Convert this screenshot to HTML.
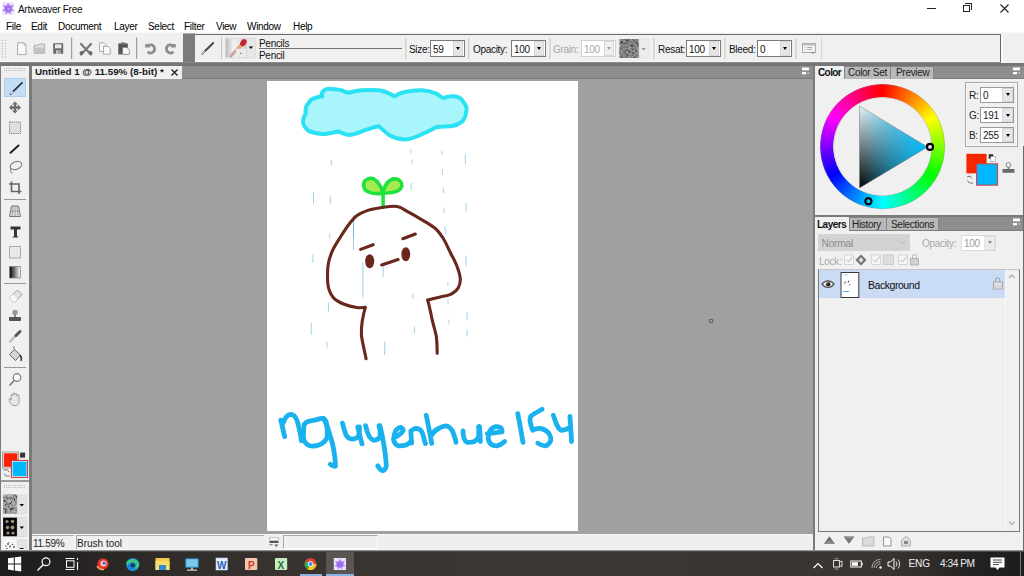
<!DOCTYPE html>
<html><head><meta charset="utf-8">
<style>
*{margin:0;padding:0;box-sizing:border-box}
html,body{width:1024px;height:576px;overflow:hidden;background:#fff;font-family:"Liberation Sans",sans-serif;color:#000}
.a{position:absolute}
.t{position:absolute;white-space:nowrap;font-size:10px;line-height:14px;color:#000;letter-spacing:-.3px}
.vs{position:absolute;width:1px;background:#c9c9c9}
.box{position:absolute;background:#fff;border:1px solid #7a7a7a}
.dd{position:absolute;background:#e6e6e6;border:1px solid #d6d6d6}
.arr{position:absolute;width:0;height:0;border-left:2.5px solid transparent;border-right:2.5px solid transparent;border-top:3px solid #000}
svg{position:absolute;overflow:visible}
</style></head><body>
<!-- ============ TITLE BAR ============ -->
<svg style="left:2px;top:2px" width="13" height="13" viewBox="0 0 13 13">
<rect x="0" y="0" width="12.5" height="13" fill="#eee6fb"/>
<path d="M6.2 .8L8 3.6L11.6 2.8L10 6.4L12.3 8.8L9 9.6L8.4 12.4L6.2 10.6L3.6 12.4L3.2 9.6L.2 8.6L2.4 6.3L1 3L4.4 3.6Z" fill="#b58af2"/>
<circle cx="6.2" cy="6.6" r="3.2" fill="#9c6cf0"/>
<circle cx="6.6" cy="7" r="1.2" fill="#c8a4f8"/>
</svg>
<div class="t" style="left:18px;top:3px;color:#111">Artweaver Free</div>
<!-- window controls -->
<div class="a" style="left:927px;top:8px;width:9px;height:1px;background:#222"></div>
<div class="a" style="left:963px;top:5px;width:7px;height:7px;border:1px solid #222"></div>
<div class="a" style="left:965px;top:3px;width:7px;height:7px;border-top:1px solid #222;border-right:1px solid #222"></div>
<svg style="left:1000px;top:4px" width="9" height="9" viewBox="0 0 9 9"><path d="M.5 .5L8.5 8.5M8.5 .5L.5 8.5" stroke="#222" stroke-width="1.1"/></svg>

<!-- ============ MENU ============ -->
<div class="t" style="left:6px;top:20px">File</div>
<div class="t" style="left:31px;top:20px">Edit</div>
<div class="t" style="left:58px;top:20px">Document</div>
<div class="t" style="left:114px;top:20px">Layer</div>
<div class="t" style="left:148px;top:20px">Select</div>
<div class="t" style="left:184px;top:20px">Filter</div>
<div class="t" style="left:216px;top:20px">View</div>
<div class="t" style="left:247px;top:20px">Window</div>
<div class="t" style="left:293px;top:20px">Help</div>

<!-- ============ TOOLBAR ROW ============ -->
<div class="a" style="left:0;top:32px;width:1024px;height:1px;background:#f8f8f8"></div>
<div class="a" style="left:0;top:33px;width:1024px;height:29px;background:#f0f0f0"></div>
<div class="a" style="left:183px;top:33px;width:12px;height:1px;background:#b0b0b0"></div>
<div class="a" style="left:183px;top:34px;width:12px;height:28px;background:#7b7b7b"></div>
<div class="a" style="left:195px;top:34px;width:806px;height:28px;border-top:1px solid #6a6a6a;border-right:1px solid #6a6a6a;background:#f0f0f0"></div>
<div class="a" style="left:0;top:61px;width:183px;height:1px;background:#f8f8f8"></div><div class="a" style="left:195px;top:61px;width:805px;height:1px;background:#f8f8f8"></div><div class="a" style="left:0;top:62px;width:1024px;height:1px;background:#8a8a8a"></div><div class="a" style="left:1001px;top:61px;width:23px;height:1px;background:#f0f0f0"></div><div class="a" style="left:1001px;top:62px;width:23px;height:1px;background:#f6f6f6"></div><div class="a" style="left:1001px;top:34px;width:2px;height:28px;background:#f8f8f8"></div><div class="a" style="left:0;top:63px;width:1024px;height:3px;background:#757575"></div>
<!-- toolbar 1 icons -->
<svg style="left:0;top:34px" width="183" height="29" viewBox="0 34 183 29">
<g fill="#a8a8a8"><rect x="1.7" y="40" width="1" height="1"/><rect x="4.8" y="40" width="1" height="1"/><rect x="1.7" y="43" width="1" height="1"/><rect x="4.8" y="43" width="1" height="1"/><rect x="1.7" y="45.6" width="1" height="1"/><rect x="4.8" y="45.6" width="1" height="1"/><rect x="1.7" y="48.2" width="1" height="1"/><rect x="4.8" y="48.2" width="1" height="1"/><rect x="1.7" y="50.8" width="1" height="1"/><rect x="4.8" y="50.8" width="1" height="1"/><rect x="1.7" y="53.5" width="1" height="1"/><rect x="4.8" y="53.5" width="1" height="1"/><rect x="1.7" y="56.5" width="1" height="1"/><rect x="4.8" y="56.5" width="1" height="1"/></g>
<!-- new -->
<path d="M17.6 42.8H24L26 45V54.6H17.6Z" fill="#fbfbfb" stroke="#a9a9a9" stroke-width="1"/>
<path d="M24 42.8V45H26" fill="none" stroke="#a9a9a9" stroke-width=".8"/>
<!-- open -->
<path d="M34.2 45.2H38.5L39.5 44H44.6V53.3H34.2Z" fill="#dedede" stroke="#aaa" stroke-width="1"/>
<path d="M34.5 47.6H44.6V53.3H34.5Z" fill="#c4c4c4"/>
<!-- save -->
<rect x="53.2" y="43.2" width="10" height="10.6" fill="#6a6a6a"/>
<rect x="55" y="44.3" width="6.4" height="4" fill="#e8e8e8"/>
<rect x="56" y="50.4" width="4.5" height="3.4" fill="#cfcfcf"/>
<rect x="58.3" y="50.8" width="1" height="2.6" fill="#6a6a6a"/>
<rect x="71.2" y="37.5" width="1" height="21.5" fill="#8a8a8a"/>
<!-- cut -->
<path d="M81 44L91 54.5M91 44L81 54.5" stroke="#777" stroke-width="2.2" stroke-linecap="round"/>
<circle cx="81.5" cy="53" r="2" fill="#6d6d6d"/><circle cx="90.5" cy="53" r="2" fill="#6d6d6d"/>
<!-- copy -->
<path d="M99.6 42.8H104L105.8 44.6V51.5H99.6Z" fill="#fafafa" stroke="#a3a3a3" stroke-width=".9"/>
<path d="M103.4 46.3H108.2L110.2 48.3V54.2H103.4Z" fill="#fafafa" stroke="#a3a3a3" stroke-width=".9"/>
<!-- paste -->
<rect x="118.3" y="43.4" width="9.5" height="11" fill="#555"/>
<rect x="121" y="42.4" width="4" height="2" fill="#777"/>
<path d="M122.6 47.5H127L129.3 49.8V54.4H122.6Z" fill="#fafafa" stroke="#888" stroke-width=".8"/>
<rect x="136.2" y="37.5" width="1" height="21.5" fill="#8a8a8a"/>
<!-- undo -->
<path d="M148.5 45.3A4.1 4.1 0 1 1 147.6 51.8" fill="none" stroke="#8c8c8c" stroke-width="2.8"/>
<rect x="145.2" y="44" width="5" height="3.5" fill="#909090"/>
<path d="M172.5 45.3A4.1 4.1 0 1 0 173.4 51.8" fill="none" stroke="#8c8c8c" stroke-width="2.8"/>
<rect x="170.8" y="44" width="5" height="3.5" fill="#909090"/>
</svg>

<!-- toolbar 2 -->
<svg style="left:195px;top:34px" width="640" height="29" viewBox="195 34 640 29">
<path d="M202 54L213.2 43" stroke="#4a4a4a" stroke-width="2" stroke-linecap="round"/>
<path d="M201.5 54.5L204.5 51.5" stroke="#c8c8c8" stroke-width="1.6" stroke-linecap="round"/>
<rect x="221" y="36.5" width="1" height="23" fill="#c4c4c4"/>
<defs><linearGradient id="pg" x1="0" y1="0" x2="1" y2="0"><stop offset="0" stop-color="#bdbdbd"/><stop offset=".35" stop-color="#f2f2f2"/><stop offset="1" stop-color="#d0d0d0"/></linearGradient></defs>
<rect x="225.4" y="38.2" width="30.3" height="19.7" fill="#ececec" stroke="#cfcfcf" stroke-width=".8"/>
<rect x="226" y="38.8" width="21.4" height="18.6" fill="url(#pg)"/>
<path d="M231 56L239.5 47" stroke="#c8a8a4" stroke-width="3.2" stroke-linecap="round"/>
<path d="M237.5 49.5L242 44.5" stroke="#eea27c" stroke-width="3.6"/>
<ellipse cx="243.4" cy="42.6" rx="2.8" ry="3.8" transform="rotate(35 243.4 42.6)" fill="#c0232b"/>
<rect x="236" y="48.8" width="10.3" height="8.4" fill="#ebebeb"/>
<rect x="240.3" y="52.8" width="1" height="1" fill="#222"/>
<rect x="247.4" y="38.8" width="8" height="18.6" fill="#e6e6e6"/>
<path d="M248.8 46.6H253L250.9 49Z" fill="#000"/>
<rect x="259" y="48" width="143" height="1" fill="#707070"/>
<rect x="405.3" y="38" width="1" height="21" fill="#c4c4c4"/>
<rect x="468.2" y="38" width="1" height="21" fill="#c4c4c4"/>
<rect x="549.5" y="38" width="1" height="21" fill="#c4c4c4"/>
<rect x="653.5" y="38" width="1" height="21" fill="#c4c4c4"/>
<rect x="724.5" y="38" width="1" height="21" fill="#c4c4c4"/>
<rect x="795.5" y="38" width="1" height="21" fill="#c4c4c4"/>
<rect x="821" y="38" width="1" height="21" fill="#d4d4d4"/>
<!-- texture swatch -->
<defs><filter id="nz" x="0" y="0" width="100%" height="100%"><feTurbulence type="fractalNoise" baseFrequency=".55" numOctaves="2" seed="3"/><feColorMatrix type="matrix" values="0 0 0 0 .5  0 0 0 0 .5  0 0 0 0 .5  0 0 0 0 1"/></filter>
<filter id="nz2" x="0" y="0" width="100%" height="100%"><feTurbulence type="fractalNoise" baseFrequency=".38" numOctaves="3" seed="7" result="t"/><feColorMatrix in="t" type="matrix" values="1.6 0 0 0 -.45  1.6 0 0 0 -.45  1.6 0 0 0 -.45  0 0 0 0 1"/></filter></defs>
<rect x="619.5" y="39" width="19.5" height="19" fill="#6c6c6c"/><rect x="619.5" y="39" width="19.5" height="19" filter="url(#nz2)" opacity=".42"/>
<rect x="639" y="39" width="10" height="19" fill="#ececec" stroke="#dcdcdc" stroke-width=".6"/>
<path d="M641.2 48H646L643.6 50.6Z" fill="#9a9a9a"/>
<!-- options icon -->
<rect x="802.5" y="43.5" width="13" height="9" fill="#f4f4f4" stroke="#aaa" stroke-width="1"/>
<rect x="802.5" y="43.5" width="13" height="2" fill="#bbb"/>
<path d="M804.5 47.5h1M804.5 49.5h1M807 47.5h5M807 49.5h5" stroke="#aaa"/>
<path d="M811 52H815L813 54Z" fill="#888"/>
</svg>
<div class="t" style="left:259px;top:37px;color:#111">Pencils</div>
<div class="t" style="left:259px;top:48.5px;color:#111">Pencil</div>
<div class="t" style="left:409px;top:42.5px;color:#111">Size:</div>
<div class="box" style="left:430px;top:40px;width:35px;height:17px"></div>
<div class="t" style="left:433px;top:42.5px;color:#111">59</div>
<div class="dd" style="left:453px;top:41px;width:10px;height:15px"></div>
<div class="arr" style="left:calc(455.5px + .5px);top:47px"></div>
<div class="t" style="left:473px;top:42.5px;color:#111">Opacity:</div>
<div class="box" style="left:511px;top:40px;width:35px;height:17px"></div>
<div class="t" style="left:514px;top:42.5px;color:#111">100</div>
<div class="dd" style="left:534px;top:41px;width:10px;height:15px"></div>
<div class="arr" style="left:calc(536.5px + .5px);top:47px"></div>
<div class="t" style="left:553px;top:42.5px;color:#a8a8a8">Grain:</div>
<div class="box" style="left:581px;top:40px;width:35px;height:17px;border-color:#d2d2d2"></div>
<div class="t" style="left:584px;top:42.5px;color:#a8a8a8">100</div>
<div class="dd" style="left:604px;top:41px;width:10px;height:15px;background:#efefef"></div>
<div class="arr" style="left:calc(606.5px + .5px);top:47px;border-top-color:#a0a0a0"></div>
<div class="t" style="left:658px;top:42.5px;color:#111">Resat:</div>
<div class="box" style="left:686px;top:40px;width:35px;height:17px"></div>
<div class="t" style="left:689px;top:42.5px;color:#111">100</div>
<div class="dd" style="left:709px;top:41px;width:10px;height:15px"></div>
<div class="arr" style="left:calc(711.5px + .5px);top:47px"></div>
<div class="t" style="left:729px;top:42.5px;color:#111">Bleed:</div>
<div class="box" style="left:757px;top:40px;width:35px;height:17px"></div>
<div class="t" style="left:760px;top:42.5px;color:#111">0</div>
<div class="dd" style="left:780px;top:41px;width:10px;height:15px"></div>
<div class="arr" style="left:calc(782.5px + .5px);top:47px"></div>

<!-- ============ LEFT TOOLBOX ============ -->
<div class="a" style="left:0;top:66px;width:32px;height:484px;background:#7b7b7b"></div>
<div class="a" style="left:1px;top:66px;width:28px;height:414px;background:#f0f0f0"></div>
<div class="a" style="left:1px;top:482px;width:28px;height:68px;background:#f0f0f0"></div>
<svg style="left:0;top:66px" width="32" height="486" viewBox="0 66 32 486">
<path d="M4 68.5H26M4 70.5H26" stroke="#a8a8a8" stroke-width=".9" stroke-dasharray="1 1.2"/>
<rect x="4.5" y="78.3" width="21" height="18.3" fill="#c6def5" stroke="#a4c8ec" stroke-width=".8"/>
<path d="M10.5 94L22 82.8" stroke="#2b3a4a" stroke-width="1.8" stroke-linecap="round"/>
<path d="M10.5 94L13 91.5" stroke="#f4f4f4" stroke-width="1.2"/>
<!-- move -->
<path d="M15 101.5L18 104.5H16.2V106.2H18V104.5L21 107.5L18 110.5V108.8H16.2V110.5H18L15 113.5L12 110.5H13.8V108.8H12V110.5L9 107.5L12 104.5V106.2H13.8V104.5H12Z" fill="#6e6e6e"/>
<!-- rect select -->
<rect x="9.5" y="122" width="11" height="11.5" fill="#dedede" stroke="#777" stroke-width="1" stroke-dasharray="1.2 1"/>
<!-- wand -->
<path d="M10.5 152.8L18.5 145.5" stroke="#222" stroke-width="2" stroke-linecap="round"/>
<!-- lasso -->
<ellipse cx="16" cy="165.5" rx="6" ry="3.8" transform="rotate(-20 16 165.5)" fill="none" stroke="#888" stroke-width="1.2"/>
<path d="M11 168C10 171 11 173 12.5 173.5" fill="none" stroke="#888" stroke-width="1.1"/>
<!-- crop -->
<path d="M11.5 181.5V191.5H21.5M9 184H19V194" fill="none" stroke="#666" stroke-width="1.6"/>
<rect x="4" y="199" width="22" height="1" fill="#9a9a9a"/>
<!-- perspective -->
<path d="M11.5 206H18.5L20.5 216.5H9.5Z" fill="#e2e2e2" stroke="#777" stroke-width="1"/>
<path d="M15 206V216.5M10.5 211.3H19.6M13 206L12 216.5M17 206L18 216.5" stroke="#888" stroke-width=".7"/>
<!-- text T -->
<path d="M10.5 226.5H20.5V229.5H17V236.5H18.3V237.5H12.7V236.5H14V229.5H10.5Z" fill="#333"/>
<!-- rect -->
<rect x="9.5" y="246.5" width="11" height="11.5" fill="#e9e9e9" stroke="#aaa" stroke-width="1"/>
<!-- gradient -->
<defs><linearGradient id="gr" x1="0" x2="1"><stop offset="0" stop-color="#000"/><stop offset="1" stop-color="#fff"/></linearGradient></defs>
<rect x="9.5" y="266.5" width="11" height="11.5" fill="url(#gr)" stroke="#888" stroke-width=".8"/>
<rect x="4" y="283" width="22" height="1" fill="#9a9a9a"/>
<!-- eraser -->
<path d="M9.5 298L17.5 290L22 294.5L14 302.5Z" fill="#e2e2e2" stroke="#9a9a9a" stroke-width="1"/><path d="M9.5 298L13 294.5L17.5 299L14 302.5Z" fill="#f8f8f8"/>
<!-- stamp -->
<circle cx="15" cy="312.5" r="2.7" fill="#999"/>
<rect x="14" y="314.5" width="2" height="2.5" fill="#888"/>
<rect x="9" y="317" width="12" height="4" rx="1" fill="#555"/>
<!-- eyedropper -->
<path d="M10 341.5L17 334.5" stroke="#bbb" stroke-width="2.2" stroke-linecap="round"/>
<path d="M16 335.5L20 331.5" stroke="#555" stroke-width="3" stroke-linecap="round"/>
<!-- bucket -->
<path d="M9.5 354.5L14.5 349.5L20.5 355L15.5 360.5Z" fill="#d4d4d4" stroke="#666" stroke-width="1"/><path d="M14 349V346.5" stroke="#666" stroke-width="1"/>
<path d="M20 355C21.5 357 22 359 21 361" fill="none" stroke="#333" stroke-width="1.4"/>
<rect x="4" y="367" width="22" height="1" fill="#9a9a9a"/>
<!-- zoom -->
<circle cx="17" cy="377.5" r="3.8" fill="#fafafa" stroke="#777" stroke-width="1.2"/>
<path d="M14.2 380.5L10 385" stroke="#777" stroke-width="1.6" stroke-linecap="round"/>
<!-- hand -->
<path d="M11 400V395.5A1 1 0 0 1 13 395.5V394A1 1 0 0 1 15 394V394.5A1 1 0 0 1 17 394.5V396A1 1 0 0 1 19 396V402C19 404 17.5 405.5 15.5 405.5H14C12 405.5 10.5 403.5 9.5 401.5L9 399.5A1 1 0 0 1 11 400Z" fill="#e6e6e6" stroke="#888" stroke-width=".8"/>
<!-- colors -->
<rect x="2.6" y="452" width="16" height="16" fill="#f0f0f0" stroke="#8a8a8a" stroke-width=".8"/>
<rect x="3.8" y="453.3" width="13.6" height="13.5" fill="#fc2100"/>
<rect x="20.1" y="452.6" width="5" height="5" fill="#333"/>
<rect x="11.4" y="460.4" width="16.2" height="17" fill="#f6f6f6" stroke="#d03030" stroke-width="1"/>
<rect x="12.6" y="461.6" width="14" height="14.6" fill="#00b8ff"/>
<path d="M3.5 470L7 469.5L9 472M4 473.5L6 476L9.5 476" fill="none" stroke="#777" stroke-width="1"/>
<rect x="1" y="480" width="28" height="2" fill="#9a9a9a"/>
<path d="M4 485.5H26M4 487.5H26" stroke="#a8a8a8" stroke-width=".9" stroke-dasharray="1 1.2"/>
<rect x="3.1" y="494.9" width="14.1" height="18.8" fill="#8a8a8a"/><rect x="3.1" y="494.9" width="14.1" height="18.8" filter="url(#nz2)" opacity=".6"/>
<rect x="17.2" y="494.9" width="9.4" height="18.8" fill="#e4e4e4" stroke="#d4d4d4" stroke-width=".6"/>
<path d="M19.5 504H24L21.75 506.5Z" fill="#000"/>
<rect x="3.1" y="517.6" width="14.1" height="18.7" fill="#080808"/>
<g fill="#9a8e78"><circle cx="7" cy="521.5" r="1.6"/><circle cx="12.5" cy="521.5" r="1.8"/><circle cx="7.5" cy="527.5" r="1.8"/><circle cx="12.5" cy="527.5" r="2"/><circle cx="8" cy="533" r="1.6"/><circle cx="13" cy="533" r="1.6"/></g>
<rect x="17.2" y="517.6" width="9.4" height="18.7" fill="#e4e4e4" stroke="#d4d4d4" stroke-width=".6"/>
<path d="M19.5 526.5H24L21.75 529Z" fill="#000"/>
<rect x="3.1" y="540" width="14.1" height="12" fill="#f8f8f8"/>
<g fill="#555"><circle cx="6" cy="546" r=".8"/><circle cx="8" cy="544" r=".9"/><circle cx="10" cy="546.5" r="1"/><circle cx="12.5" cy="544.5" r=".8"/><circle cx="14" cy="547" r=".9"/><circle cx="7" cy="549" r=".9"/><circle cx="11" cy="549.5" r=".8"/><circle cx="13.5" cy="550" r=".7"/><circle cx="9" cy="542.5" r=".6"/><circle cx="5" cy="550" r=".6"/></g>
<rect x="17.2" y="540" width="9.4" height="12" fill="#e4e4e4" stroke="#d4d4d4" stroke-width=".6"/>
<path d="M19.5 548H24L21.75 550.5Z" fill="#000"/>
</svg>

<!-- ============ DOC TAB STRIP ============ -->
<div class="a" style="left:32px;top:66px;width:781px;height:13px;background:#8e8e8e"></div>
<div class="a" style="left:182px;top:78px;width:631px;height:1px;background:#7c7c7c"></div>
<div class="a" style="left:32px;top:66px;width:150px;height:13px;background:#f0f0f0"></div>
<div class="t" style="left:35px;top:65px;font-weight:bold;font-size:9.8px;letter-spacing:0;color:#1a1a1a">Untitled 1 @ 11.59% (8-bit) *</div>
<svg style="left:171px;top:69px" width="7" height="7" viewBox="0 0 7 7"><path d="M.5 .5L6.5 6.5M6.5 .5L.5 6.5" stroke="#222" stroke-width="1.4"/></svg>

<!-- ============ CANVAS AREA ============ -->
<div class="a" style="left:32px;top:79px;width:781px;height:455px;background:#a0a0a0"></div>
<div class="a" style="left:267px;top:81px;width:311px;height:450px;background:#fff"></div>
<div class="a" style="left:709px;top:319px;width:4px;height:4px;border:1px solid #666"></div>

<!-- DRAWING -->
<svg style="left:0;top:0" width="1024" height="576" viewBox="0 0 1024 576">
<g fill="none" stroke-linecap="round" stroke-linejoin="round">
<!-- cloud -->
<path d="M322.4 96.3 C320 91 326 88.5 331 88.9 C336 89 340 90 341.7 90.2 C344 91.5 346 92.5 348.7 92.8 C354 91 358 90 362.8 90.2 C368 90 374 90 378.6 90.2 C385 91 390 93.5 394.4 96.3 C398 94 401 92.5 405 91.9 C411 90.5 417 90 422.5 90.2 C428 90.5 433 92 436.6 93.7 C439 95 441 97 443.6 98 C447 96.5 451 96 454.2 96.3 C459 97 462 99 463 101.6 C466 105 467 108 466.5 110.4 C466 115 465 118 463 120.9 C459 124 455 126 450.7 126.2 C445 126.5 440 126.5 436.6 127 C431 130 427 132 422.5 134 C416 137 410 139.5 405 139.4 C399 139 393 137.5 389.1 135 C385 132 381 128 378.6 126.2 C374 127 370 128.5 366.3 129.7 C360 132 354 135 348.7 135 C344 134.5 341 132.5 338.2 131.5 C333 132.5 327 134 322.4 134 C317 133.5 311 132 308.3 130.6 C304 127 302.5 124 303 120.9 C303.5 117 305 115 305.7 113.9 C305 109 306 106 308.3 103.3 C310 100 313 98.5 315.3 98 C318 97 320 96.5 322.4 96.3 Z" fill="#a8f5fb" stroke="#2ae2f4" stroke-width="4"/>
<!-- rain -->
<g stroke="#3c9ed6" stroke-width=".8" opacity=".6">
<path d="M331.3 160.4V165M313.5 192.6V203.3M330.4 197.2V203.3M329.8 234V238.6M353.4 215.6V250M410.8 149.6V152.7M411.1 183.4V189.5M441.8 151V154M442.4 169.6V174.2M443.3 188V192.6M444 208V212.5M444.8 226.4V229.4M465.4 154.2V163.4M466 203.3V211M312.9 254.7V262.5M362.9 262.5V296.9M328.5 303V311M311.3 323.4V334.4M327 342V347M383.2 267V276.6M384.7 342V354.7M412.9 293.75V298.4M414.4 326.6V332.8M445.7 229.7V234.4M447.9 282.8V286M466 256V265.6M467 312.5V320M353.5 218.8V237.5M412 160V163M448 300V304M449 320V324M467 330V336"/>
</g>
<!-- sprout -->
<path d="M382.4 192.6C382.8 191.1 380.7 186.8 379.2 184.5C377.8 182.2 375.5 179.8 373.6 178.9C371.7 178.0 369.6 178.3 368.0 178.9C366.4 179.5 364.5 180.8 364.0 182.6C363.5 184.4 363.8 187.8 364.9 189.5C366.0 191.2 368.5 191.9 370.5 192.6C372.5 193.3 374.8 193.6 376.8 193.6C378.7 193.6 382.0 194.1 382.4 192.6Z" fill="#a6ea50" stroke="#1fe23e" stroke-width="3.6"/>
<path d="M383.2 192.3C383.3 190.9 384.9 186.5 386.1 184.5C387.3 182.5 388.9 181.0 390.5 180.1C392.1 179.2 393.8 178.7 395.5 178.9C397.2 179.1 399.5 180.2 400.5 181.4C401.5 182.7 402.2 184.8 401.8 186.4C401.3 188.0 399.7 189.7 398.0 190.8C396.3 191.8 393.8 192.2 391.8 192.6C389.7 193.0 386.9 193.1 385.5 193.0C384.1 192.9 383.1 193.7 383.2 192.3Z" fill="#a6ea50" stroke="#1fe23e" stroke-width="3.6"/>
<path d="M383.1 205.3 V192" stroke="#1fe23e" stroke-width="3.6"/>
<!-- character -->
<g stroke="#6a271c" stroke-width="3.1">
<path d="M365.0 307.5C363.6 307.5 360.2 308.0 356.7 307.5C353.2 307.0 348.0 305.9 344.2 304.3C340.4 302.7 336.4 300.9 333.8 298.1C331.1 295.3 329.5 291.5 328.5 287.7C327.5 283.9 327.5 279.4 327.5 275.2C327.5 271.0 327.6 266.9 328.5 262.7C329.4 258.5 330.8 254.4 332.7 250.2C334.6 246.0 337.4 241.9 340.0 237.7C342.6 233.5 345.5 228.8 348.3 225.2C351.1 221.5 353.6 218.2 356.7 215.8C359.8 213.4 362.9 212.0 367.1 210.6C371.3 209.2 376.7 208.2 381.7 207.5C386.7 206.8 392.7 205.7 397.2 206.5C401.7 207.3 404.5 210.0 408.6 212.2C412.7 214.4 417.5 217.2 422.0 219.9C426.5 222.6 431.9 225.5 435.4 228.5C438.9 231.5 440.4 233.9 443.0 238.0C445.6 242.1 448.5 248.8 450.7 253.3C452.9 257.8 454.8 260.7 456.4 264.8C458.0 268.9 459.9 274.3 460.2 278.1C460.5 281.9 459.9 285.0 458.3 287.7C456.7 290.4 453.9 292.8 450.7 294.4C447.5 296.0 443.0 296.2 439.2 297.2C435.4 298.1 429.6 299.6 427.7 300.1"/>
<path d="M365.3 307.2 C364 312 363 317 362.2 321.25 C361.5 326 361.3 331 361.4 335.3 C362.5 343 364.5 351 366.1 358.75"/>
<path d="M427.8 300.2 C429.5 307 431 314 432.5 321.25 C434 327 435.5 332 436.4 336.9 C437 342 437.2 348 437.2 353.3"/>
<path d="M360.6 249.4 L373.1 244.7M402.8 238.75 L415.3 234M381.7 265 L398.1 259.5"/>
</g>
<ellipse cx="369.7" cy="261.3" rx="4.5" ry="7" fill="#6a271c"/>
<ellipse cx="405.8" cy="254.3" rx="4.4" ry="7" fill="#6a271c"/>
<!-- signature -->
<g stroke="#1ab2ee" stroke-width="4.8">
<path d="M284.6 436.6 C283.2 430 281.8 424.5 280.8 420.2 M283.2 423 C284.6 418.5 287 414.8 290.5 414.3 C293.5 414.2 295.6 416.8 297 420.5 C299 426.5 300.5 434 301.5 440.8"/>
<path d="M304.5 424.0C305.4 422.4 307.1 421.9 309.0 421.2C310.9 420.5 313.8 420.3 316.0 419.8C318.2 419.3 320.8 418.0 322.5 418.3C324.2 418.6 325.2 419.6 326.0 421.5C326.8 423.4 327.1 427.2 327.2 430.0C327.3 432.8 327.7 435.9 326.8 438.2C325.9 440.4 324.1 442.2 322.0 443.5C319.9 444.8 316.4 445.8 314.0 446.0C311.6 446.2 309.2 445.9 307.5 444.8C305.8 443.7 304.4 441.8 303.8 439.5C303.2 437.2 303.5 433.6 303.6 431.0C303.7 428.4 303.6 425.6 304.5 424.0Z"/>
<path d="M323.7 418.5 C326.5 424 329 430 330.4 436.6 C332 441 333 446 333.8 450.1 C334.7 455 335.3 461 335.5 466 C334 467 332 465.5 330.4 464.3"/>
<path d="M342.5 423.2 C343.5 428 345 432 346.2 435.4 C348 438 350 439 352.2 439.1 C355 439 357 438 358.3 436.6 C359.5 433 359.8 430 359.5 426.9 M357.8 427 C359 433 360.5 438 362 443.9"/>
<path d="M365.6 425.7 C366.5 430 368 434 369.3 436.6 C371 439 372.5 440 374.1 440.3 C377 440 379 438.5 380.2 436.6 C380.5 433 380 429 379 425.7 M380 425.7 C381.5 432 383 439 383.9 445.1 C385 452 386 459 386.3 465.8 C385.5 469 384 470.5 382.7 470.7 C380.5 470 379 468 377.8 465.8"/>
<path d="M393.5 439.7 C394 435 395 431 396.9 429.3 C398.5 427.5 400 427.3 401.3 427.6 C403 428.5 403.5 430 403 431 C401 434 398 436 395.2 437.1 M393.5 439.7 C394.5 443 396.5 445.5 398.7 445.8 C401.5 446 404 445.5 406.5 444.9 C408.5 443.5 410 442.5 410.8 441.5"/>
<path d="M411.7 443.2 C411.3 439 411 435 410.8 431 C413 429 414.5 428.5 416 428.4 C418.5 428.5 420 429.5 421.3 431 C423 433.5 423.5 436 423.9 438 C424.5 441 425 443 425.5 443.5"/>
<path d="M426.3 415.4 C428 424 430 434 431.7 443.3 M431 436 C433 432 435.5 430 438.6 428.5 C441 427 443.5 426 445.6 425.8 C448.5 426 451 428.5 452.5 431 C454 435 455.5 439 456 442.3"/>
<path d="M463 431 C463 434 463.3 436 463.9 438 C465 441 466 442 467.4 442.3 C470 442.5 472.5 442.2 474.3 441.5 C476.5 440 478 438.5 478.6 437.1 C479 433 478.8 430 478.6 426.7 M479.5 426.7 C480 432 480.3 437 480.4 441.5"/>
<path d="M487.3 433.6 C492 433.2 497 432.5 502.1 431.9 C502 429.5 501.5 428 500.3 427.6 C498.5 426.5 497 426.5 495.1 426.7 C492.5 427.5 491 429 489.9 431 C488.8 433.5 488.3 436 488.2 438 C488.5 441 489.5 443 490.8 444 C492.5 445.3 494.5 446 496.9 445.8 C500 445.3 502.5 443.5 504.7 441.5"/>
<path d="M517.8 413.7 C519 420 520.5 428 521.5 434 C522 437 522.5 440 523 442.3"/>
<path d="M542.1 409.3 C538 411.5 534 413.5 530.8 416.3 C530.2 417.5 530 419 530 420.6 C530.5 424 531.5 427.5 532.6 430.2 C535 428.8 537.5 428.2 540.4 428.4 C544 429 547 431 549.1 433.6 C550.5 436 551 438.5 550.8 440.6 C549.5 443.5 547.5 445.5 545.6 445.8 C542.5 446 540 444.5 537.8 443.2"/>
<path d="M553.4 415.4 C554.5 419 555.5 422 556.9 425 C558 427.5 559.5 429.5 561.2 430.2 C564 430.5 567 429 569.9 427.6 M569.9 416.3 C570.5 424 571 433 571.6 441.5"/>
</g>
</g>
</svg>

<!-- ============ STATUS BAR ============ -->
<div class="a" style="left:32px;top:534px;width:781px;height:18px;background:#efefef;border-top:1px solid #f8f8f8"></div>

<div class="t" style="left:33px;top:537px;color:#222">11.59%</div>
<div class="a" style="left:74px;top:535px;width:1px;height:14px;background:#fafafa"></div>
<div class="t" style="left:77px;top:537px;color:#222;letter-spacing:0">Brush tool</div>
<div class="a" style="left:283px;top:535px;width:95px;height:14px;border:1px solid #a9a9a9;border-right-color:#fafafa;border-bottom-color:#fafafa"></div>
<div class="a" style="left:32px;top:535px;width:42px;height:14px;border-top:1px solid #a9a9a9"></div>
<div class="a" style="left:76px;top:535px;width:188px;height:14px;border-top:1px solid #a9a9a9;border-left:1px solid #a9a9a9"></div>
<svg style="left:269px;top:537px" width="11" height="11" viewBox="0 0 11 11"><rect x=".5" y=".8" width="9" height="2.4" fill="#fff" stroke="#999" stroke-width=".6"/><rect x=".5" y="4" width="9" height="2" fill="#555"/><rect x=".5" y="7" width="3" height="1.2" fill="#888"/><path d="M5 7.4H9.5L7.25 10Z" fill="#666"/></svg>

<!-- ============ RIGHT PANEL ============ -->
<div class="a" style="left:813px;top:66px;width:2px;height:484px;background:#7b7b7b"></div>
<div class="a" style="left:815px;top:66px;width:209px;height:13px;background:#8e8e8e;border-bottom:1px solid #7c7c7c"></div>
<div class="a" style="left:815px;top:79px;width:209px;height:136px;background:#f0f0f0"></div>
<div class="a" style="left:815px;top:215px;width:209px;height:2px;background:#7b7b7b"></div>
<div class="a" style="left:815px;top:217px;width:209px;height:14px;background:#8e8e8e;border-bottom:1px solid #7c7c7c"></div>
<div class="a" style="left:815px;top:231px;width:209px;height:319px;background:#f0f0f0"></div>
<!-- color tabs -->
<div class="a" style="left:815px;top:66px;width:29px;height:13px;background:#f0f0f0"></div>
<div class="a" style="left:844px;top:66px;width:47px;height:13px;background:#b9b9b9;border:1px solid #858585;border-bottom:none"></div>
<div class="a" style="left:891px;top:66px;width:43px;height:13px;background:#b9b9b9;border:1px solid #858585;border-left:none;border-bottom:none"></div>
<div class="t" style="left:818px;top:66px;font-weight:bold;color:#111;letter-spacing:-.6px">Color</div>
<div class="t" style="left:848px;top:66px;color:#222">Color Set</div>
<div class="t" style="left:896px;top:66px;color:#222">Preview</div>
<svg style="left:1012px;top:67px" width="9" height="9" viewBox="0 0 9 9"><rect x="1" y=".5" width="7" height="2.8" fill="#fff"/><rect x="1" y="5" width="4" height="2.3" fill="#fff"/><path d="M6 5.5H8.5L7.2 7Z" fill="#ddd"/></svg>
<svg style="left:1012px;top:218px" width="9" height="9" viewBox="0 0 9 9"><rect x="1" y=".5" width="7" height="2.8" fill="#fff"/><rect x="1" y="5" width="4" height="2.3" fill="#fff"/><path d="M6 5.5H8.5L7.2 7Z" fill="#ddd"/></svg>
<svg style="left:801px;top:67px" width="9" height="9" viewBox="0 0 9 9"><rect x="1" y=".5" width="7" height="2.8" fill="#fff"/><rect x="1" y="5" width="4" height="2.3" fill="#fff"/><path d="M6 5.5H8.5L7.2 7Z" fill="#ddd"/></svg>
<!-- color wheel -->
<div class="a" style="left:820.2px;top:84.2px;width:124.8px;height:124.8px;border-radius:50%;background:conic-gradient(#f00,#ff0,#0f0,#0ff,#00f,#f0f,#f00);-webkit-mask:radial-gradient(circle,transparent 49px,#000 49.6px);mask:radial-gradient(circle,transparent 49px,#000 49.6px)"></div>
<svg style="left:815px;top:79px" width="209" height="136" viewBox="815 79 209 136">
<defs>
<linearGradient id="tw" x1="859.5" y1="106" x2="859.5" y2="188" gradientUnits="userSpaceOnUse"><stop offset="0" stop-color="#e6f4fa"/><stop offset="1" stop-color="#000"/></linearGradient>
<linearGradient id="tc" x1="859.5" y1="146.9" x2="927.4" y2="146.9" gradientUnits="userSpaceOnUse"><stop offset="0" stop-color="#00bfff" stop-opacity="0"/><stop offset="1" stop-color="#00bfff" stop-opacity="1"/></linearGradient>
</defs>
<circle cx="882.6" cy="146.6" r="62.2" fill="none" stroke="#8a8a8a" stroke-width=".6" opacity=".6"/>
<circle cx="882.6" cy="146.6" r="49.2" fill="none" stroke="#8a8a8a" stroke-width=".6" opacity=".6"/>
<path d="M859.5 106L927.4 146.9L859.5 188Z" fill="url(#tw)"/>
<path d="M859.5 106L927.4 146.9L859.5 188Z" fill="url(#tc)"/>
<path d="M859.5 106L927.4 146.9L859.5 188Z" fill="none" stroke="#777" stroke-width=".5"/>
<circle cx="930" cy="146.9" r="3" fill="#e8e8e8" stroke="#000" stroke-width="2.2"/>
<circle cx="868.4" cy="201.2" r="3.1" fill="none" stroke="#000" stroke-width="2.1"/>
<!-- RGB group -->
<rect x="965.5" y="82.5" width="52" height="64" fill="none" stroke="#a9a9a9" stroke-width="1"/>
<rect x="966.5" y="83.5" width="50" height="62" fill="none" stroke="#fff" stroke-width=".6"/>
<!-- swatches -->
<rect x="966.4" y="153.8" width="20.2" height="19.6" fill="#f42800"/>
<rect x="988.7" y="154.2" width="4.5" height="4.5" fill="#333"/>
<rect x="990.8" y="156.5" width="4.8" height="4.8" fill="#fff" stroke="#888" stroke-width=".5"/>
<rect x="976.6" y="163.8" width="21" height="21.4" fill="#00b6ff" stroke="#e0393a" stroke-width="1"/>
<path d="M967 177L970 176L972 178.5M967.5 180.5L969.5 183L973 183" fill="none" stroke="#777" stroke-width="1"/>
<!-- stamp -->
<circle cx="1008.5" cy="165" r="2.4" fill="none" stroke="#888" stroke-width="1"/>
<rect x="1007.5" y="167" width="2" height="2" fill="#888"/>
<rect x="1002.5" y="169" width="12" height="3.8" fill="#6a6a6a"/>
</svg>
<div class="t" style="left:969px;top:89px;color:#222">R:</div>
<div class="box" style="left:980px;top:86.5px;width:34px;height:16px;border-color:#9a9a9a"></div>
<div class="t" style="left:983px;top:89px;color:#222">0</div>
<div class="dd" style="left:1002px;top:87.5px;width:11px;height:14px"></div>
<div class="arr" style="left:calc(1005px + .5px);top:93px"></div>
<div class="t" style="left:969px;top:109px;color:#222">G:</div>
<div class="box" style="left:980px;top:107px;width:34px;height:16px;border-color:#9a9a9a"></div>
<div class="t" style="left:983px;top:109px;color:#222">191</div>
<div class="dd" style="left:1002px;top:108px;width:11px;height:14px"></div>
<div class="arr" style="left:calc(1005px + .5px);top:113.5px"></div>
<div class="t" style="left:969px;top:129px;color:#222">B:</div>
<div class="box" style="left:980px;top:127px;width:34px;height:16px;border-color:#9a9a9a"></div>
<div class="t" style="left:983px;top:129px;color:#222">255</div>
<div class="dd" style="left:1002px;top:128px;width:11px;height:14px"></div>
<div class="arr" style="left:calc(1005px + .5px);top:133.5px"></div>

<!-- layers tabs -->
<div class="a" style="left:815px;top:217px;width:34px;height:14px;background:#f0f0f0"></div>
<div class="a" style="left:849px;top:217px;width:38px;height:13px;background:#b9b9b9;border:1px solid #858585;border-bottom:none"></div>
<div class="a" style="left:887px;top:217px;width:52px;height:13px;background:#b9b9b9;border:1px solid #858585;border-left:none;border-bottom:none"></div>
<div class="t" style="left:817px;top:218px;font-weight:bold;color:#111;letter-spacing:-.5px">Layers</div>
<div class="t" style="left:852px;top:218px;color:#222">History</div>
<div class="t" style="left:891px;top:218px;color:#222">Selections</div>
<!-- blend -->
<div class="a" style="left:818px;top:234px;width:92px;height:16.5px;background:#d3d3d3"></div>
<div class="t" style="left:821.5px;top:236.5px;color:#8c8c8c;font-size:10.3px">Normal</div>
<svg style="left:899px;top:240px" width="7" height="5" viewBox="0 0 7 5"><path d="M.5 .8L3.5 3.8L6.5 .8" fill="none" stroke="#b8b8b8" stroke-width="1"/></svg>
<div class="t" style="left:922px;top:237px;color:#a8a8a8">Opacity:</div>
<div class="box" style="left:961px;top:234.5px;width:35px;height:16px;border-color:#dadada"></div>
<div class="t" style="left:964px;top:237px;color:#999">100</div>
<div class="dd" style="left:984px;top:235.5px;width:11px;height:14px;background:#ececec;border-color:#e2e2e2"></div>
<div class="arr" style="left:calc(987px + .5px);top:241px;border-top-color:#888"></div>
<div class="t" style="left:819px;top:255px;color:#aaa">Lock:</div>
<svg style="left:840px;top:252px" width="80" height="16" viewBox="840 252 80 16">
<g fill="#f6f6f6" stroke="#cfcfcf" stroke-width=".8"><rect x="844.5" y="255" width="9" height="9.5"/><rect x="871.5" y="255" width="9" height="9.5"/><rect x="898.5" y="255" width="9" height="9.5"/></g>
<g fill="none" stroke="#bbb" stroke-width="1"><path d="M846 259.5L848.5 262L852.5 256.5M873 259.5L875.5 262L879.5 256.5M900 259.5L902.5 262L906.5 256.5"/></g>
<path d="M861 254.5L866.5 260L861 265.5L855.5 260Z" fill="#6e6e6e"/>
<path d="M861 257L863.5 260L861 263L858.5 260Z" fill="#ddd"/>
<rect x="883.5" y="255" width="10" height="9.5" fill="#ddd" stroke="#c4c4c4" stroke-width=".8"/>
<rect x="910.5" y="258.5" width="8" height="6.5" fill="#d0d0d0" stroke="#aaa" stroke-width=".8"/>
<path d="M912.5 258.5V256.5A2 2 0 0 1 916.5 256.5V258.5" fill="none" stroke="#aaa" stroke-width=".9"/>
</svg>
<!-- layer list -->
<div class="a" style="left:818px;top:269px;width:202px;height:262.5px;border:1px solid #7a7a7a;border-top-color:#c4c4c4;background:#f0f0f0"></div>
<div class="a" style="left:819px;top:270px;width:186.5px;height:28px;background:#cadcf5"></div>
<div class="a" style="left:1005px;top:269.5px;width:14px;height:261px;background:#f0f0f0;border-left:1px solid #f7f7f7"></div>
<svg style="left:1007px;top:272px" width="10" height="8" viewBox="0 0 10 8"><path d="M2 6L4.8 3L7.6 6" fill="none" stroke="#b8b8b8" stroke-width="1.8"/></svg>
<svg style="left:1007px;top:519px" width="10" height="8" viewBox="0 0 10 8"><path d="M2 2.5L4.8 5.5L7.6 2.5" fill="none" stroke="#b8b8b8" stroke-width="1.8"/></svg>
<svg style="left:819px;top:270px" width="190" height="28" viewBox="819 270 190 28">
<path d="M822 284.2C824 281.6 826.3 280.9 828 280.9C829.7 280.9 832 281.6 834 284.2C832 286.9 829.7 287.5 828 287.5C826.3 287.5 824 286.9 822 284.2Z" fill="#f4f4f4" stroke="#4a4a4a" stroke-width="1.2"/>
<circle cx="828.2" cy="284.2" r="2.3" fill="#2a2a2a"/>
<path d="M826.5 283.5L828 282.6" stroke="#ccc" stroke-width=".8"/>
<rect x="841" y="272.5" width="17.8" height="25" fill="#fff" stroke="#3a3a3a" stroke-width="1"/>
<rect x="843.5" y="274.5" width="5" height=".8" fill="#6ad8f0"/>
<path d="M844.5 283.5L845.5 281.5M848 282.5L849 280.5M849 284.5L850 285" stroke="#5a3028" stroke-width="1" fill="none"/>
<rect x="843" y="291" width="6" height=".8" fill="#3a9ed6"/>
<rect x="993.5" y="282" width="9" height="7" fill="#e6e6e6" stroke="#999" stroke-width=".8"/>
<path d="M995.5 282V280A2.2 2.2 0 0 1 999.9 280V282" fill="none" stroke="#999" stroke-width=".9"/>
<path d="M994 285H1002M994 287H1002" stroke="#bbb" stroke-width=".6"/>
</svg>
<div class="t" style="left:868px;top:278px;color:#111;font-size:10.5px;letter-spacing:-.45px">Background</div>
<!-- bottom icons -->
<svg style="left:815px;top:532px" width="110" height="18" viewBox="815 532 110 18">
<path d="M824 543.8L829.4 536.2L834.8 543.8Z" fill="#6a6a6a"/>
<path d="M824 543.8L829.4 540L834.8 543.8Z" fill="#888"/>
<path d="M843.6 536.5L849 544L854.4 536.5Z" fill="#777"/>
<path d="M843.6 536.5L849 538.5L854.4 536.5Z" fill="#999"/>
<path d="M862.5 538H867L868 537H874V546H862.5Z" fill="#dadada" stroke="#b5b5b5" stroke-width=".9"/>
<path d="M883.5 537H889L891 539V546H883.5Z" fill="#fafafa" stroke="#888" stroke-width=".9"/>
<path d="M901.5 540L906 536.5L910.5 540V546H901.5Z" fill="#dcdcdc" stroke="#aaa" stroke-width=".9"/>
<rect x="904" y="541" width="4" height="3" fill="#888"/>
</svg>

<div class="a" style="left:1px;top:549px;width:28px;height:1px;background:#f6f6f6"></div>
<div class="a" style="left:32px;top:549px;width:781px;height:1px;background:#f6f6f6"></div>
<div class="a" style="left:815px;top:549px;width:209px;height:1px;background:#f6f6f6"></div>
<div class="a" style="left:0;top:550px;width:1024px;height:1px;background:#909090"></div>
<div class="a" style="left:0;top:551px;width:1024px;height:1px;background:#4e4a47"></div>
<div class="a" style="left:1023px;top:146px;width:1px;height:405px;background:#6a6a6a"></div>
<!-- ============ TASKBAR ============ -->
<div class="a" style="left:0;top:552px;width:1024px;height:24px;background:linear-gradient(90deg,#1d1c1b 0%,#2b2826 12%,#38332f 28%,#3c3733 50%,#3a3531 86%,#322e2b 90%,#242221 95%,#1e1d1c 100%)"></div>
<div class="a" style="left:326px;top:552px;width:28px;height:24px;background:#5a5552"></div>
<div class="a" style="left:299.5px;top:574px;width:22px;height:2px;background:#8ab4e0"></div>
<div class="a" style="left:326px;top:574px;width:28px;height:2px;background:#8ab4e0"></div>
<svg style="left:0;top:552px" width="1024" height="24" viewBox="0 552 1024 24">
<!-- windows -->
<path d="M8 558.2L13.8 557.4V563.4H8ZM14.8 557.3L21.2 556.4V563.4H14.8ZM8 564.4H13.8V570.4L8 569.6ZM14.8 564.4H21.2V571.4L14.8 570.5Z" fill="#fff"/>
<!-- search -->
<circle cx="46" cy="561.8" r="3.9" fill="none" stroke="#fff" stroke-width="1.2"/>
<path d="M43.2 564.8L37.5 570.5" stroke="#fff" stroke-width="1.3"/>
<!-- task view -->
<path d="M65.5 558.5H74.5M65.5 569.5H74.5" stroke="#fff" stroke-width="1"/>
<rect x="66.5" y="560.8" width="7.5" height="6.5" fill="none" stroke="#fff" stroke-width="1"/>
<path d="M77.5 558V560M77.5 562V570" stroke="#fff" stroke-width="1.1"/>
<!-- red app -->
<circle cx="103" cy="563.8" r="5.6" fill="#e5332a"/>
<circle cx="103.5" cy="563.5" r="3" fill="#f6d2c8"/>
<circle cx="104" cy="563.2" r="1.6" fill="#6a5ad0"/>
<path d="M97 566C99 569 101 570 104 569.5" stroke="#f3a35c" stroke-width="1.4" fill="none"/>
<!-- edge -->
<circle cx="132.7" cy="564.7" r="6.6" fill="#1c86d8"/>
<path d="M126.3 563C127.5 558 137.5 557 139.3 563.5C139.5 567 137 569.5 134 569C136.5 567 136.5 563 133 562.5C130 562.3 128 564 127.5 566Z" fill="#3cc48a"/>
<circle cx="132.8" cy="565.3" r="2.3" fill="#0c3f7a"/>
<!-- explorer -->
<rect x="155.5" y="558" width="14" height="12" fill="#f2c94a"/>
<rect x="155.5" y="561" width="14" height="9" fill="#fbdb6a"/>
<rect x="159" y="565" width="7" height="5" fill="#2f8ad8"/>
<!-- monitor -->
<rect x="185.5" y="558.5" width="13" height="9" fill="#4ab0e8"/>
<rect x="186.5" y="559.5" width="11" height="7" fill="#78c8f0"/>
<rect x="191" y="567.5" width="2" height="2" fill="#ccc"/>
<rect x="187" y="569.5" width="10" height="1.2" fill="#ddd"/>
<!-- word -->
<rect x="216" y="558" width="11.5" height="12" fill="#e8eefa"/>
<rect x="216" y="558" width="11.5" height="12" fill="none" stroke="#b8c8ea" stroke-width=".6"/>
<text x="217" y="568.6" font-family="Liberation Sans" font-weight="bold" font-size="10" fill="#2a5bb8">W</text>
<!-- ppt -->
<rect x="245" y="558" width="12.3" height="12" rx="1" fill="#f6c6b0"/>
<text x="248" y="568.5" font-family="Liberation Sans" font-weight="bold" font-size="10" fill="#c4421c">P</text>
<!-- excel -->
<rect x="275" y="558" width="12.2" height="12" rx="1" fill="#c8ecc0"/>
<text x="277.5" y="568.5" font-family="Liberation Sans" font-weight="bold" font-size="10" fill="#217346">X</text>
<!-- chrome -->
<circle cx="310.5" cy="564" r="6" fill="#dd4433"/>
<path d="M310.5 564L316.5 564A6 6 0 0 1 307.5 569.2Z" fill="#f5c518"/>
<path d="M310.5 564L307.5 569.2A6 6 0 0 1 305.3 561Z" fill="#2aa84a"/>
<circle cx="310.5" cy="564" r="2.8" fill="#fff"/>
<circle cx="310.5" cy="564" r="2" fill="#4a8af4"/>
<!-- artweaver -->
<rect x="333.8" y="558" width="12.2" height="12" fill="#ece4fb"/>
<path d="M339.9 558.8L341.5 561.5L344.8 560.8L343.5 564L345.5 566.3L342.5 567L341.9 569.5L339.9 567.8L337.6 569.5L337.2 567L334.5 566.2L336.5 564L335.2 561L338.2 561.5Z" fill="#b58af2"/>
<circle cx="339.9" cy="564.2" r="2.9" fill="#9c6cf0"/>
<!-- tray -->
<path d="M813.5 568L818 563.5L822.5 568" fill="none" stroke="#fff" stroke-width="1.2"/>
<rect x="833.5" y="560.5" width="6" height="6.5" fill="none" stroke="#ddd" stroke-width="1"/>
<path d="M839.5 562L842 561V566.5L839.5 565.5" fill="none" stroke="#ddd" stroke-width="1"/>
<path d="M834.5 558.8H838.5M834.5 569H838.5" stroke="#bbb" stroke-width=".8"/>
<rect x="850.8" y="561" width="10.5" height="6" fill="none" stroke="#fff" stroke-width="1"/>
<rect x="852" y="562.2" width="6" height="3.6" fill="#fff"/>
<rect x="861.5" y="562.8" width="1.2" height="2.4" fill="#fff"/>
<path d="M872 568A8 8 0 0 1 880.5 559.5M874.2 568A5.8 5.8 0 0 1 880.5 561.8M876.4 568A3.6 3.6 0 0 1 880.5 564" fill="none" stroke="#aaa" stroke-width="1"/>
<circle cx="880.5" cy="567.5" r="1.2" fill="#fff"/>
<path d="M888 562H890.5L894 558.5V569.5L890.5 566H888Z" fill="none" stroke="#fff" stroke-width="1"/>
<path d="M896 561.5A4 4 0 0 1 896 566.5M898 559.5A7 7 0 0 1 898 568.5" fill="none" stroke="#ddd" stroke-width="1"/>
<!-- notification -->
<path d="M990.5 557.5H1004.5V567.5H999.5L997.5 570L995.5 567.5H990.5Z" fill="#fff"/>
<path d="M993 560H1002M993 562.3H1002M993 564.6H999" stroke="#333" stroke-width=".9"/>
<rect x="1020" y="552" width="1" height="24" fill="#7a7a7a"/>
</svg>
<div class="t" style="left:908.5px;top:556.5px;color:#eee;font-size:10.2px;letter-spacing:-.2px">ENG</div>
<div class="t" style="left:940px;top:556.5px;color:#eee;font-size:10.2px;letter-spacing:-.5px">4:34 PM</div>
</body></html>
